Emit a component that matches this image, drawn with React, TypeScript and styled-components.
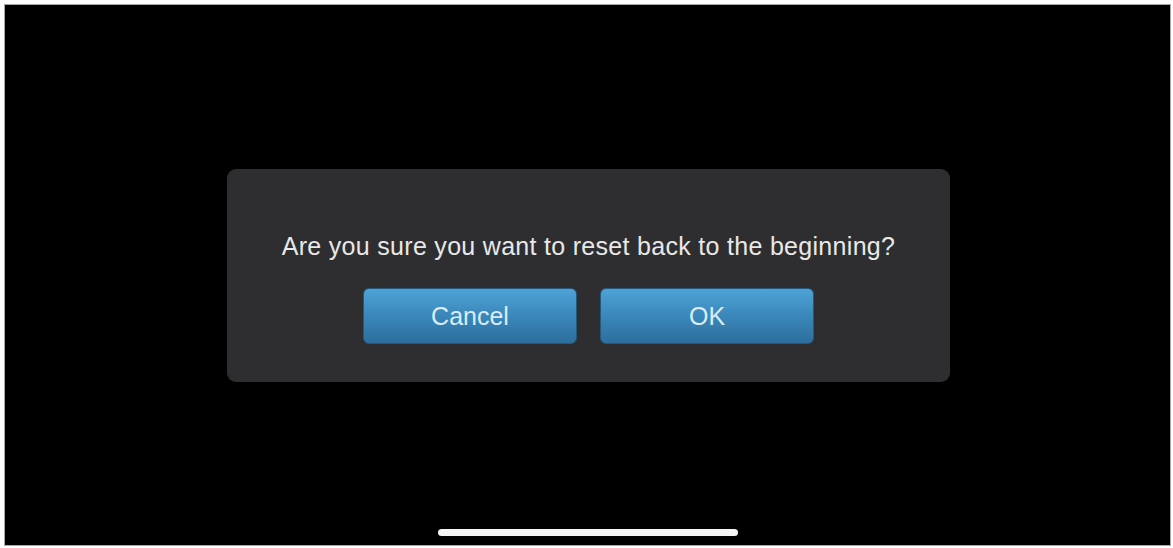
import React from 'react';
import styled, { createGlobalStyle } from 'styled-components';

const GlobalStyle = createGlobalStyle`
  html, body {
    margin: 0;
    padding: 0;
    background: #ffffff;
    font-family: "Liberation Sans", Arial, sans-serif;
  }
`;

const buttons = ['Cancel', 'OK'];

const App: React.FC = () => {
  return (
    <>
      <GlobalStyle />
      <Page>
        <Screen>
          <Dialog role="alertdialog">
            <Message>Are you sure you want to reset back to the beginning?</Message>
            <Actions>
              {buttons.map((label) => (
                <ActionButton key={label}>{label}</ActionButton>
              ))}
            </Actions>
          </Dialog>
          <HomeIndicator />
        </Screen>
      </Page>
    </>
  );
};

const Page = styled.div`
  width: 1173px;
  height: 548px;
  padding: 5px 3px 3px 5px;
  box-sizing: border-box;
`;

const Screen = styled.div`
  height: 100%;
  background: #000000;
  box-shadow: 0 0 0 1px #a8a8a8;
  display: flex;
  flex-direction: column;
  align-items: center;
  padding-top: 164px;
  box-sizing: border-box;
`;

const Dialog = styled.div`
  width: 723px;
  height: 213px;
  box-sizing: border-box;
  background: #2e2e30;
  border-radius: 9px;
  display: flex;
  flex-direction: column;
  align-items: center;
  padding-top: 62px;
  margin-left: 2px;
`;

const Message = styled.p`
  margin: 0;
  color: #e8e8e8;
  font-size: 25px;
  line-height: 30px;
  letter-spacing: 0.3px;
`;

const Actions = styled.div`
  display: flex;
  gap: 23px;
  margin-top: 27px;
`;

const ActionButton = styled.button`
  width: 214px;
  height: 56px;
  border: 1px solid #24587c;
  border-radius: 6px;
  background: linear-gradient(to bottom, #4ea3d6 0%, #3a87ba 50%, #2d6e9c 100%);
  color: #d9ecf7;
  font-family: "Liberation Sans", Arial, sans-serif;
  font-size: 25px;
  padding: 0;
  cursor: pointer;
`;

const HomeIndicator = styled.div`
  margin-top: auto;
  margin-bottom: 9px;
  width: 300px;
  height: 7px;
  border-radius: 4px;
  background: #f4f4f4;
`;

export default App;
